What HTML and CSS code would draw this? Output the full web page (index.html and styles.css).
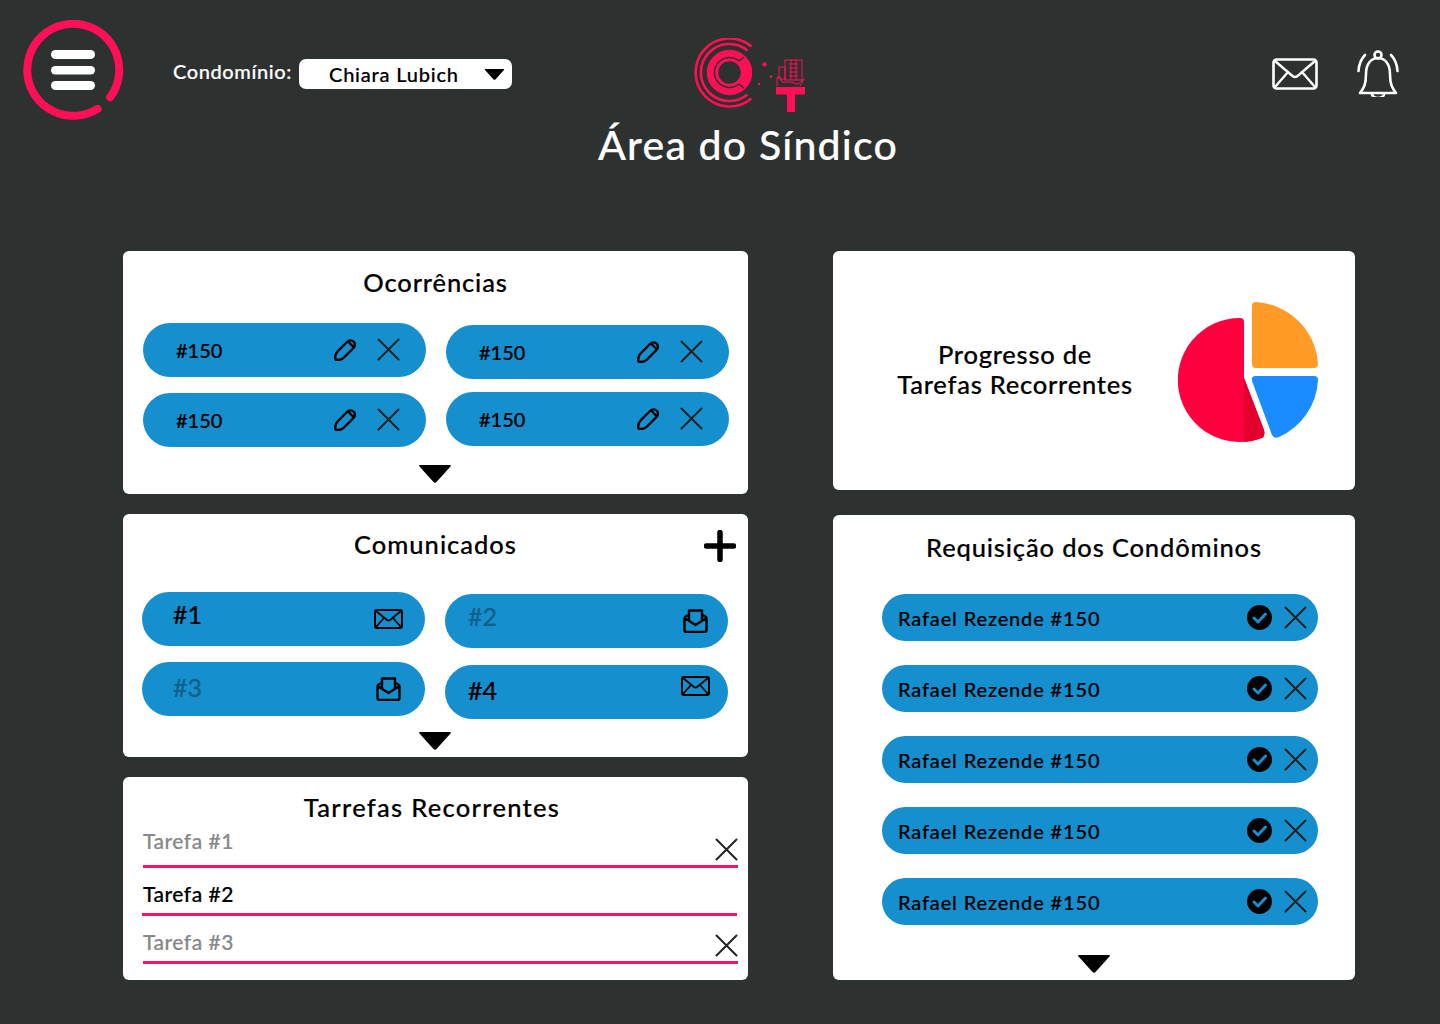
FILE: index.html
```html
<!DOCTYPE html>
<html>
<head>
  <meta charset="UTF-8">
  <title>Área do Síndico</title>
  <link rel="stylesheet" href="styles.css">
</head>
<body>
  <!-- Shared icons -->
  <svg class="sprite" aria-hidden="true">
    <symbol id="i-x" viewBox="0 0 23 23"><path d="M1.500 1.500L21.500 21.500M21.500 1.500L1.500 21.500" fill="none" stroke="#222" stroke-width="2" stroke-linecap="round"/></symbol>
    <symbol id="i-pencil" viewBox="0 0 22 22"><path d="M1.500 20.500C.5 17 2 14 4 12L13 3C15 1 18 1 20 3C21.500 5 21 7.500 19 9.500L10 18.500C8 20.500 5 21.500 1.500 20.500ZM14 2.500L19.500 8" fill="none" stroke="#000" stroke-width="2.400" stroke-linejoin="round"/></symbol>
    <symbol id="i-mail" viewBox="0 0 29 20"><rect x="1" y="1" width="27" height="18" rx="2" fill="none" stroke="#000" stroke-width="2"/><path d="M2 2L13 11Q14.500 12 16 11L27 2M2 18L10 9M27 18L19 9" fill="none" stroke="#000" stroke-width="1.800"/></symbol>
    <symbol id="i-open" viewBox="0 0 25 24"><path d="M6 11V1.500H19V11M1.500 9L12.500 16L23.500 9M5.500 6L2.500 7.500Q1.500 8 1.500 10V21Q1.500 23 3.500 23H21.500Q23.500 23 23.500 21V10Q23.500 8 22.500 7.500L19.500 6" fill="none" stroke="#000" stroke-width="2.400" stroke-linejoin="round"/></symbol>
    <symbol id="i-check" viewBox="0 0 25 25"><circle cx="12.500" cy="12.500" r="12.500" fill="#000"/><path d="M7 13L11 17L18.500 9" fill="none" stroke="#168fce" stroke-width="3" stroke-linecap="round" stroke-linejoin="round"/></symbol>
    <symbol id="i-down" viewBox="0 0 32 18"><path d="M1 0H31Q32.500 0 31.500 1.500L17.500 17Q16 18.500 14.500 17L.5 1.500Q-.5 0 1 0Z" fill="#000"/></symbol>
  </svg>

  <header class="top">
    <div class="top-left">
      <svg class="menu-icon" viewBox="0 0 101 101">
        <path d="M87.200 77.200A46 46 0 1 0 74.500 88.900" fill="none" stroke="#ff0f55" stroke-width="8" stroke-linecap="round"/>
        <rect x="28" y="30" width="44" height="9" rx="4.500" fill="#fff"/>
        <rect x="28" y="46" width="44" height="8.500" rx="4.200" fill="#fff"/>
        <rect x="28" y="61" width="44" height="9" rx="4.500" fill="#fff"/>
      </svg>
      <span class="condo-label">Condomínio:</span>
      <div class="condo-select">
        <span>Chiara Lubich</span>
        <svg class="condo-arrow"><use href="#i-down"/></svg>
      </div>
    </div>

    <div class="top-center">
      <svg class="logo" viewBox="0 0 111 74">
        <g fill="none" stroke="#ff0f55">
          <path d="M57.500 8.500A34 34 0 1 0 57.500 60.500" stroke-width="2.600"/>
          <path d="M53.500 12.500A28.500 28.500 0 1 0 53.500 56.500" stroke-width="2.600"/>
          <circle cx="35.500" cy="34.500" r="17" stroke-width="11.500"/>
        </g>
        <g fill="none" stroke="#2d3130">
          <path d="M45.100 23A15 15 0 1 0 45.100 46" stroke-width="1.500"/>
          <path d="M45 23L50 19M45 46L50 50" stroke-width="1.500"/>
        </g>
        <g fill="#ff0f55">
          <rect x="68" y="25.500" width="5" height="1.800"/>
          <rect x="69.600" y="24" width="1.800" height="5"/>
          <circle cx="77" cy="38.500" r="1.300"/>
          <circle cx="65" cy="46" r="1.200"/>
          <rect x="82" y="49" width="29" height="7.500"/>
          <rect x="93" y="49" width="8" height="25"/>
        </g>
        <g fill="none" stroke="#ff0f55" stroke-width="1">
          <rect x="91" y="22" width="17" height="20"/>
          <path d="M95 26H104M95 30H104M95 34H104M95 38H104M97 22V42M102 22V42"/>
          <rect x="85" y="29" width="6" height="12"/>
          <path d="M83 48V39H86L88 44H96L104 46L110 41L106 48"/>
        </g>
      </svg>
      <h1>Área do Síndico</h1>
    </div>

    <div class="top-right">
      <svg class="top-mail" viewBox="0 0 46 32">
        <rect x="1.500" y="1.500" width="43" height="29" rx="3" fill="none" stroke="#fff" stroke-width="2.600"/>
        <path d="M3 3L20.500 18Q23 20 25.500 18L43 3M3 29L16 14M43 29L30 14" fill="none" stroke="#fff" stroke-width="2.400"/>
      </svg>
      <svg class="top-bell" viewBox="0 0 42 47">
        <g fill="none" stroke="#fff" stroke-width="2.600" stroke-linecap="round">
          <circle cx="21" cy="5" r="3.500"/>
          <path d="M3 43H39C35 38 33 34 33 24C33 14 28 8 21 8C14 8 9 14 9 24C9 34 7 38 3 43Z" stroke-linejoin="round"/>
          <path d="M15 44A6 4 0 0 0 27 44"/>
          <path d="M8 5C4 9 2 14 1.500 21M34 5C38 9 40 14 40.500 21"/>
        </g>
      </svg>
    </div>
  </header>

  <main class="board">
    <div class="col col-left">
      <section class="card card-occ">
        <h2>Ocorrências</h2>
        <div class="pill-cols">
          <div class="pill-col">
            <div class="pill"><span>#150</span><span class="pill-tools"><svg class="ic-pencil"><use href="#i-pencil"/></svg><svg class="ic-x"><use href="#i-x"/></svg></span></div>
            <div class="pill"><span>#150</span><span class="pill-tools"><svg class="ic-pencil"><use href="#i-pencil"/></svg><svg class="ic-x"><use href="#i-x"/></svg></span></div>
          </div>
          <div class="pill-col occ-second">
            <div class="pill"><span>#150</span><span class="pill-tools"><svg class="ic-pencil"><use href="#i-pencil"/></svg><svg class="ic-x"><use href="#i-x"/></svg></span></div>
            <div class="pill"><span>#150</span><span class="pill-tools"><svg class="ic-pencil"><use href="#i-pencil"/></svg><svg class="ic-x"><use href="#i-x"/></svg></span></div>
          </div>
        </div>
        <svg class="more occ-more"><use href="#i-down"/></svg>
      </section>

      <section class="card card-com">
        <div class="com-head">
          <h2>Comunicados</h2>
          <svg class="plus" viewBox="0 0 32 32"><path d="M16 2.500V29.500M2.500 16H29.500" stroke="#000" stroke-width="5.500" stroke-linecap="round"/></svg>
        </div>
        <div class="pill-cols">
          <div class="pill-col">
            <div class="pill msg"><span class="msg-t up-10">#1</span><svg class="ic-mail"><use href="#i-mail"/></svg></div>
            <div class="pill msg"><span class="msg-t read up-4">#3</span><svg class="ic-open"><use href="#i-open"/></svg></div>
          </div>
          <div class="pill-col com-second">
            <div class="pill msg"><span class="msg-t read up-10 shift">#2</span><svg class="ic-open"><use href="#i-open"/></svg></div>
            <div class="pill msg"><span class="msg-t up-4 shift">#4</span><svg class="ic-mail up-13"><use href="#i-mail"/></svg></div>
          </div>
        </div>
        <svg class="more com-more"><use href="#i-down"/></svg>
      </section>

      <section class="card card-task">
        <h2>Tarrefas Recorrentes</h2>
        <div class="task done"><span>Tarefa #1</span><svg class="ic-x"><use href="#i-x"/></svg></div>
        <div class="task task-open"><span>Tarefa #2</span></div>
        <div class="task done"><span>Tarefa #3</span><svg class="ic-x"><use href="#i-x"/></svg></div>
      </section>
    </div>

    <div class="col col-right">
      <section class="card card-prog">
        <p>Progresso de<br>Tarefas Recorrentes</p>
        <svg class="pie" viewBox="0 0 140 140">
          <path d="M62 16Q66 16 66 20V76L86 128Q87.500 133 84.500 135.700A62 62 0 1 1 62 16Z" fill="#ff003f"/>
          <path d="M66 76L86 128Q87.500 133 84.500 135.700A62 62 0 0 1 66 139.900Z" fill="#e4002d"/>
          <path d="M74 4Q74 0 78 0A66 66 0 0 1 140 62Q140 66 136 66H78Q74 66 74 62Z" fill="#ff9b26"/>
          <path d="M78 74H136Q140 74 140 78A66 66 0 0 1 101 135Q96 137 94 133L74 79Q73 74 78 74Z" fill="#1a8cff"/>
        </svg>
      </section>

      <section class="card card-req">
        <h2>Requisição dos Condôminos</h2>
        <div class="req-list">
          <div class="pill req"><span>Rafael Rezende #150</span><span class="pill-tools"><svg class="ic-check"><use href="#i-check"/></svg><svg class="ic-x"><use href="#i-x"/></svg></span></div>
          <div class="pill req"><span>Rafael Rezende #150</span><span class="pill-tools"><svg class="ic-check"><use href="#i-check"/></svg><svg class="ic-x"><use href="#i-x"/></svg></span></div>
          <div class="pill req"><span>Rafael Rezende #150</span><span class="pill-tools"><svg class="ic-check"><use href="#i-check"/></svg><svg class="ic-x"><use href="#i-x"/></svg></span></div>
          <div class="pill req"><span>Rafael Rezende #150</span><span class="pill-tools"><svg class="ic-check"><use href="#i-check"/></svg><svg class="ic-x"><use href="#i-x"/></svg></span></div>
          <div class="pill req"><span>Rafael Rezende #150</span><span class="pill-tools"><svg class="ic-check"><use href="#i-check"/></svg><svg class="ic-x"><use href="#i-x"/></svg></span></div>
        </div>
        <svg class="more req-more"><use href="#i-down"/></svg>
      </section>
    </div>
  </main>
</body>
</html>
```

FILE: styles.css
```css
/* Basic reset */
* {
  margin: 0;
  padding: 0;
  box-sizing: border-box;
}
body {
  font-family: 'Lato', 'Noto Sans', sans-serif;
  font-weight: 500;
  -webkit-text-stroke: .2px currentColor; /* Lato has no medium cut here */
  background: #2d3130;
  color: #000;
  height: 1024px;
  overflow: hidden;
}
svg {
  display: block;
  flex: none;
}
.sprite {
  width: 0;
  height: 0;
}

/* Header */
.top {
  display: flex;
  height: 251px;
  padding: 20px 41px 0 23px;
}
.top-left {
  display: flex;
  align-items: flex-start;
  width: 572px;
}
.menu-icon {
  width: 101px;
  height: 101px;
}
.condo-label {
  margin: 37px 0 0 49px;
  width: 126px;
  font-size: 20px;
  line-height: 28px;
  color: #fff;
  letter-spacing: .6px;
}
.condo-select {
  display: flex;
  align-items: center;
  justify-content: space-between;
  width: 213px;
  height: 30px;
  margin-top: 39px;
  padding: 0 7px 0 30px;
  background: #fff;
  border-radius: 7px;
  font-size: 20px;
  letter-spacing: .8px;
}
.condo-arrow {
  width: 21px;
  height: 11px;
}
.top-center {
  display: flex;
  flex-direction: column;
  align-items: center;
  width: 306px;
  padding-top: 18px;
}
.logo {
  width: 111px;
  height: 74px;
  margin-left: 3px;
}
.top-center h1 {
  margin-top: 5px;
  font-size: 41px;
  line-height: 56px;
  font-weight: 500;
  color: #fff;
  letter-spacing: 1.200px;
  white-space: nowrap;
}
.top-right {
  display: flex;
  align-items: flex-start;
  gap: 39px;
  margin-left: auto;
}
.top-mail {
  width: 46px;
  height: 32px;
  margin-top: 38px;
}
.top-bell {
  width: 42px;
  height: 47px;
  margin-top: 30px;
}

/* Cards */
.board {
  display: flex;
  gap: 85px;
  padding-left: 123px;
}
.col {
  display: flex;
  flex-direction: column;
}
.col-left {
  width: 625px;
  gap: 20px;
}
.col-right {
  width: 522px;
  gap: 25px;
}
.card {
  background: #fff;
  border-radius: 6px;
}
.card h2 {
  font-size: 25.500px;
  line-height: 30px;
  font-weight: 500;
  text-align: center;
  letter-spacing: .85px;
}
.more {
  display: block;
  width: 32px;
  height: 18px;
  margin: 0 auto;
}

/* Blue pills */
.pill-cols {
  display: flex;
  gap: 20px;
}
.pill-col {
  display: flex;
  flex-direction: column;
  gap: 16px;
  width: 283px;
}
.pill {
  display: flex;
  align-items: center;
  justify-content: space-between;
  height: 54px;
  padding: 0 26px 0 33px;
  background: #168fce;
  border-radius: 27px;
  font-size: 20px;
}
.pill-tools {
  display: flex;
  align-items: center;
  gap: 21px;
}
.ic-pencil {
  width: 22px;
  height: 22px;
  margin-top: -1px;
}
.ic-x {
  width: 23px;
  height: 23px;
  margin-top: -1px;
}

/* Ocorrencias */
.card-occ {
  height: 243px;
  padding: 16px 0 0 20px;
}
.card-occ h2 {
  margin: 0 0 26px -20px;
}
.occ-second {
  gap: 13px;
  margin-top: 2px;
}
.occ-more {
  margin: 18px 0 0 276px;
}

/* Comunicados */
.card-com {
  height: 243px;
  padding: 16px 0 0 19px;
}
.com-head {
  display: grid;
  grid-template-columns: 1fr auto 1fr;
  align-items: center;
  height: 32px;
  margin: 0 12px 30px -19px;
  padding-left: 12px;
}
.com-head h2 {
  grid-column: 2;
  margin-top: -4px;
  letter-spacing: 1px;
}
.plus {
  grid-column: 3;
  justify-self: end;
  width: 32px;
  height: 32px;
}
.com-second {
  gap: 17px;
  margin-top: 2px;
}
.msg {
  padding: 0 22px 0 31px;
}
.com-second .msg {
  padding-right: 18px;
}
.msg-t {
  font-size: 25px;
}
.msg-t.shift {
  margin-left: -8px;
}
.msg-t.read {
  color: #125f89;
}
.up-10 {
  margin-top: -10px;
}
.up-4 {
  margin-top: -4px;
}
.up-13 {
  margin-top: -13px;
}
.ic-mail {
  width: 29px;
  height: 20px;
}
.ic-open {
  width: 25px;
  height: 24px;
  margin-right: 2px;
}
.com-more {
  margin: 13px 0 0 277px;
}

/* Tarefas */
.card-task {
  height: 203px;
  padding: 15px 10px 0 20px;
}
.card-task h2 {
  padding-right: 17px;
  letter-spacing: 1.300px;
}
.task {
  display: flex;
  justify-content: space-between;
  height: 48px;
  padding-top: 9px;
  border-bottom: 3px solid #ff1058;
  font-size: 21px;
  line-height: 24px;
  letter-spacing: .5px;
  color: #888;
}
.task:first-of-type {
  height: 46px;
  padding-top: 7px;
}
.task .ic-x {
  margin-top: 9px;
}
.task-open {
  height: 48px;
  padding-top: 14px;
  margin: 0 1px 0 -1px;
  color: #000;
}
.task-open span {
  margin-left: 1px;
}
.task-open + .done {
  height: 48px;
  padding-top: 14px;
}
.task-open + .done .ic-x {
  margin-top: 4px;
}

/* Progresso */
.card-prog {
  display: flex;
  align-items: center;
  height: 239px;
}
.card-prog p {
  width: 300px;
  padding: 0 0 4px 64px;
  white-space: nowrap;
  font-size: 25.500px;
  line-height: 30px;
  text-align: center;
  letter-spacing: .76px;
}
.pie {
  width: 140px;
  height: 140px;
  margin: 3px 0 0 45px;
}

/* Requisicoes */
.card-req {
  height: 465px;
  padding-top: 17px;
}
.req-list {
  display: flex;
  flex-direction: column;
  gap: 24px;
  margin: 32px 37px 30px 49px;
}
.req {
  height: 47px;
  padding: 0 11px 0 16px;
  border-radius: 24px;
  letter-spacing: .85px;
}
.req .pill-tools {
  gap: 12px;
}
.ic-check {
  width: 25px;
  height: 25px;
  margin-top: -1px;
}
```
